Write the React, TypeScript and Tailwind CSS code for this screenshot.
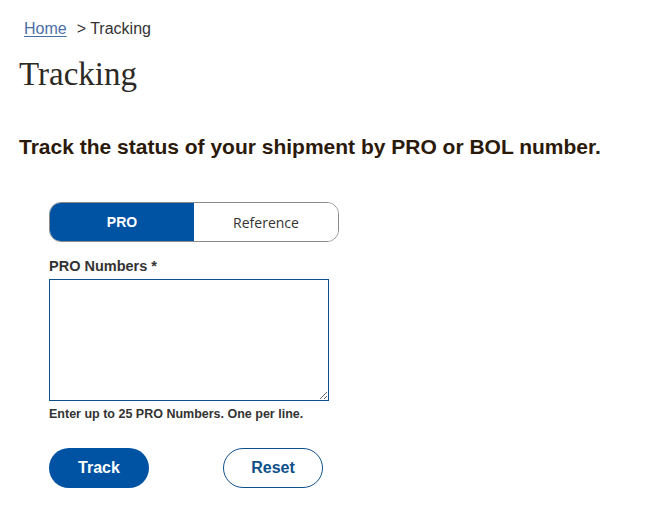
export default function App() {
  return (
    <div className="min-h-screen bg-white font-['Tahoma','Liberation_Sans',sans-serif] text-[#333]">
      <div className="px-[19px] pt-[19px]">
        <nav className="flex items-center gap-[10px] pl-[5px] text-[16px] leading-5 text-[#333]">
          <a href="#" className="text-[#4a6fa5] underline underline-offset-2">
            Home
          </a>
          <span>&gt; Tracking</span>
        </nav>
        <h1 className="mt-[17px] font-['Georgia','Liberation_Serif',serif] text-[33px] leading-9 text-[#2d2a26]">
          Tracking
        </h1>
        <h2 className="mt-[41px] whitespace-nowrap text-[21px] font-bold leading-7 text-[#2b1a0a]">
          Track the status of your shipment by PRO or BOL number.
        </h2>
      </div>

      <div className="mt-[41px] pl-[49px]">
        <div className="flex h-10 w-[290px] overflow-hidden rounded-xl border border-[#8a8a8a]">
          <button className="w-[144px] bg-[#0052a3] text-[14px] font-bold text-white">PRO</button>
          <button className="flex-1 bg-white font-['Open_Sans',sans-serif] text-[14px] text-[#333]">
            Reference
          </button>
        </div>

        <label className="mt-[14px] block text-[14.5px] font-bold leading-5 text-[#333]">
          PRO Numbers *
        </label>
        <textarea className="mt-[3px] block h-[122px] w-[280px] resize border border-[#0d4f8b] outline-none" />
        <p className="mt-[5px] text-[12.5px] font-bold leading-4 text-[#333]">
          Enter up to 25 PRO Numbers. One per line.
        </p>

        <div className="mt-[26px] flex gap-[74px]">
          <button className="h-10 w-[100px] rounded-full bg-[#0052a3] text-[16px] font-bold text-white">
            Track
          </button>
          <button className="h-10 w-[100px] rounded-full border border-[#0d4f8b] bg-white text-[16px] font-bold text-[#0d4f8b]">
            Reset
          </button>
        </div>
      </div>
    </div>
  );
}
